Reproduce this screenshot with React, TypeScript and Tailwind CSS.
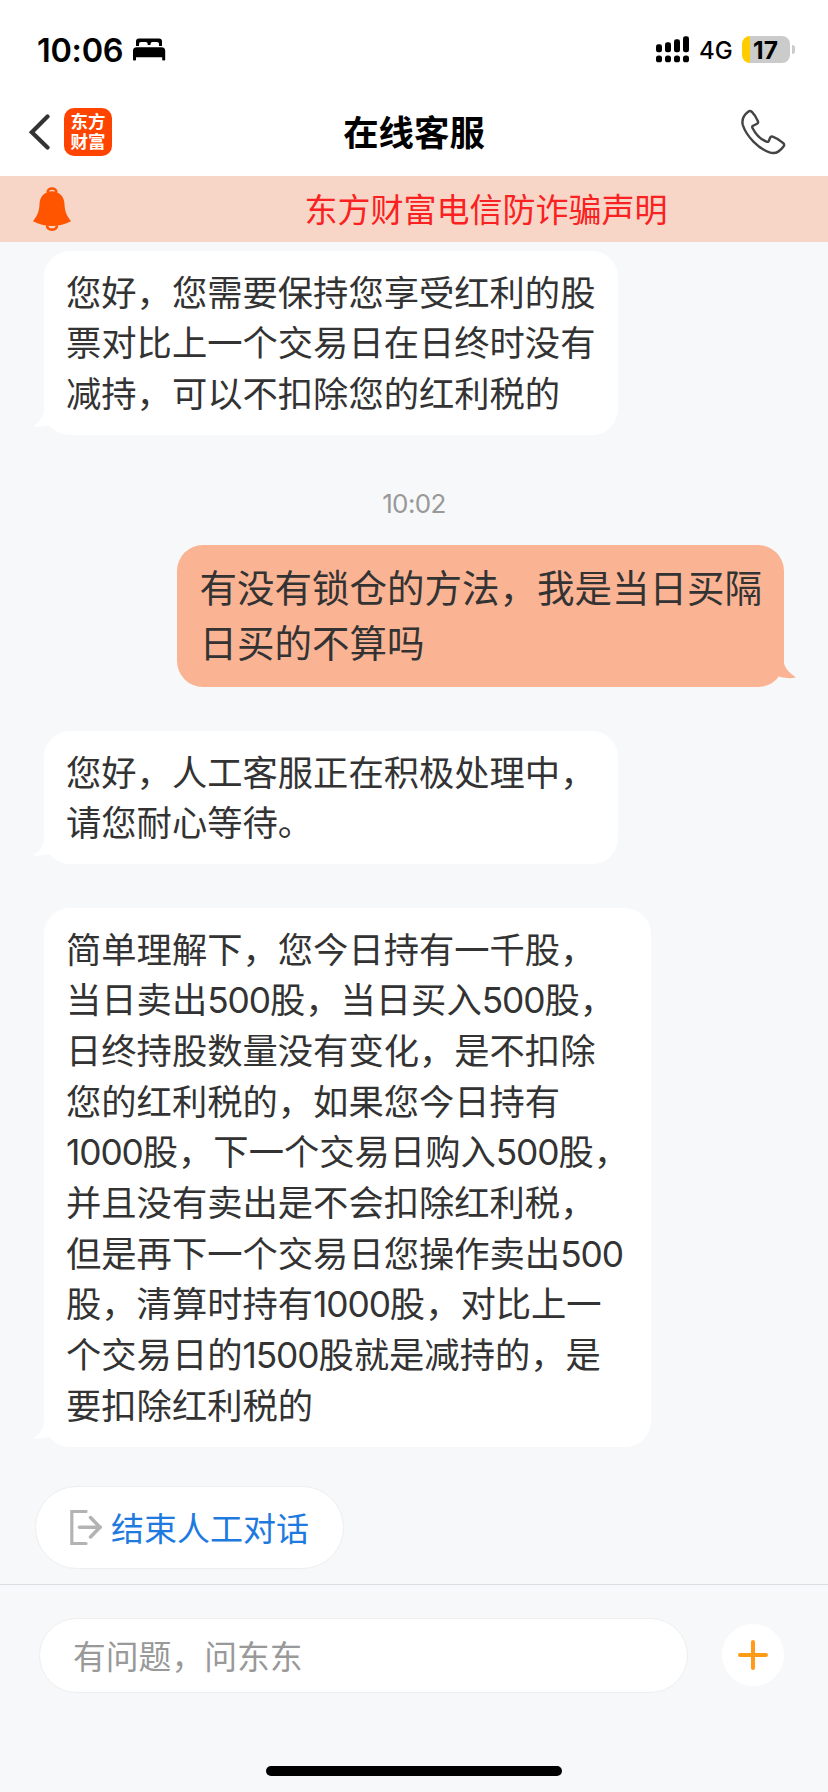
import type { ReactNode } from "react";

const agentLines = {
  dividend: ["您好，您需要保持您享受红利的股", "票对比上一个交易日在日终时没有", "减持，可以不扣除您的红利税的"],
  waiting: ["您好，人工客服正在积极处理中，", "请您耐心等待。"],
  explain: [
    "简单理解下，您今日持有一千股，",
    "当日卖出500股，当日买入500股，",
    "日终持股数量没有变化，是不扣除",
    "您的红利税的，如果您今日持有",
    "1000股，下一个交易日购入500股，",
    "并且没有卖出是不会扣除红利税，",
    "但是再下一个交易日您操作卖出500",
    "股，清算时持有1000股，对比上一",
    "个交易日的1500股就是减持的，是",
    "要扣除红利税的",
  ],
};

const userLines = ["有没有锁仓的方法，我是当日买隔", "日买的不算吗"];

function Line({ text }: { text: string }) {
  return (
    <span className="block whitespace-nowrap">
      {text.split(/(\d+)/).map((part, i) =>
        /^\d+$/.test(part) ? (
          <span key={i} className="tracking-[-1.1px]">{part}</span>
        ) : (
          part
        ),
      )}
    </span>
  );
}

function AgentBubble({ lines, className }: { lines: string[]; className: string }) {
  return (
    <div className={`relative ml-11 rounded-[26px] bg-white px-[22px] pt-[17.6px] text-[35.3px] leading-[50.67px] text-[#333] ${className}`}>
      {lines.map((l) => (
        <Line key={l} text={l} />
      ))}
      <svg className="absolute bottom-[6px] -left-[11px]" width="20" height="18" viewBox="0 0 20 18">
        <path d="M11 0C10.5 6 6 11.500 0 15.300C5 15.900 10 15.400 15.500 14.300L20 16V0Z" fill="#fff" />
      </svg>
    </div>
  );
}

function UserBubble({ lines }: { lines: string[] }) {
  return (
    <div className="relative mt-[28px] mr-11 h-[142px] w-[607px] self-end rounded-[26px] bg-[#fab494] px-[22.5px] pt-[16px] text-[37.5px] leading-[55.400px] text-[#333]">
      {lines.map((l) => (
        <Line key={l} text={l} />
      ))}
      <svg className="absolute -right-[12px] bottom-[7px]" width="20" height="18" viewBox="0 0 20 18">
        <path d="M8 1C9 6.500 14 11.500 20 15.300C15 16.800 10 16.200 4 15L0 12V0H8Z" fill="#fab494" />
      </svg>
    </div>
  );
}

function BedIcon() {
  return (
    <svg width="33" height="23" viewBox="0 0 33 23" className="ml-[10px]">
      <path d="M3 8V3.500Q3 0.500 6 0.500H26Q29 0.500 29 3.500V8H26V6Q26 4 24 4H19.500Q17.500 4 17.500 6V7H14.700V6Q14.700 4 12.700 4H8Q6 4 6 6V8Z" />
      <path d="M0 22V13Q0 9.300 3.700 9.300H28.500Q32.200 9.300 32.200 13V22Q30.700 23 29.200 22V19.300H3V22Q1.500 23 0 22Z" />
    </svg>
  );
}

function SignalIcon() {
  const heights = [8, 10, 13, 16];
  return (
    <svg width="34" height="27" viewBox="0 0 34 27">
      {heights.map((h, i) => (
        <g key={h}>
          <rect x={i * 9} y={16.300 - h} width="6" height={h} rx="2.300" />
          <rect x={i * 9} y="19.500" width="6" height="6.800" rx="2.600" />
        </g>
      ))}
    </svg>
  );
}

function StatusBar() {
  return (
    <div className="flex h-[88px] items-start pt-[36px] pr-[33px] pl-[37px] text-black">
      <div className="flex h-[27px] items-center">
        <span className="w-[86px] pt-[1px] text-[32.5px] leading-[27px] font-semibold whitespace-nowrap tracking-[-0.3px]">10:06</span>
        <BedIcon />
      </div>
      <div className="ml-auto flex h-[27px] items-center">
        <SignalIcon />
        <span className="ml-[9px] w-[43px] pt-[2px] text-[24px] leading-[27px] font-medium whitespace-nowrap">4G</span>
        <div className="flex h-[27px] w-[48px] items-center justify-center rounded-[8px] bg-[linear-gradient(90deg,#ffcc00_8px,#cbcbcb_8px)] text-[24.5px] leading-[30px] font-bold">
          <span className="-ml-[1px]">17</span>
        </div>
        <div className="ml-[2px] h-[9px] w-[3px] rounded-r-full bg-[#cbcbcb]" />
      </div>
    </div>
  );
}

function Header() {
  return (
    <div className="grid h-[88px] grid-cols-[1fr_auto_1fr] items-center">
      <div className="flex items-center pl-[28px]">
        <svg width="22" height="36" viewBox="0 0 22 36" fill="none" stroke="#333" strokeWidth="4.200">
          <path d="M19.500 2.500L3.800 18.200L19.500 33.500" strokeLinecap="round" />
        </svg>
        <div className="ml-[14px] flex h-[48px] w-[48px] flex-col items-center justify-center rounded-[10px] bg-[#ff4400] text-[17.500px] leading-[20px] font-bold text-white">
          <span>东方</span>
          <span>财富</span>
        </div>
      </div>
      <h1 className="pt-[3px] text-[35.400px] leading-[44px] font-bold text-black">在线客服</h1>
      <svg className="mr-[42px] justify-self-end" width="46" height="46" viewBox="0 0 46 46" fill="none" stroke="#444" strokeWidth="2.400" strokeLinejoin="round">
        <path d="M8.500 2.500C9.700 1.500 10.700 1.700 11.900 2.900C14.500 5.500 16.500 8.800 17.900 12.300C18.400 13.500 18 14.300 17 14.800L13.200 16.700C12.100 17.200 12 18 12.500 19C15.500 25 21 30.700 27 32.800C28 33.100 28.500 32.800 28.900 31.800L30.100 28.700C30.600 27.500 31.500 27.200 32.700 27.600C36.500 29 40.300 31.300 43.300 34.200C44.400 35.300 44.500 36.300 43.500 37.500C39.500 43 34.800 45.300 29.500 43.400C18.500 39.500 6.500 27.500 2.800 16C1.500 10.500 4.300 5.600 8.500 2.500Z" />
      </svg>
    </div>
  );
}

function Notice() {
  return (
    <div className="flex h-[66px] items-center bg-[#f8d6c7] pl-[33px]">
      <svg width="38" height="44" viewBox="0 0 38 44">
        <path d="M19 1.500C21.500 1.500 23.300 3 23.300 5M14.700 5C14.700 3 16.500 1.500 19 1.500" fill="none" stroke="#ff5500" strokeWidth="2.600" />
        <path d="M19 4.300C26.500 4.300 31.300 10 31.500 17C31.700 25 34 29 38 34.300C32 37.500 26 39 19 39C12 39 6 37.500 0 34.300C4 29 6.300 25 6.500 17C6.700 10 11.500 4.300 19 4.300Z" fill="#ff5500" />
        <path d="M14 38.500C14.500 44 23.500 44 24 38.500" fill="none" stroke="#ff5500" strokeWidth="2.600" />
      </svg>
      <p className="ml-[233.500px] pt-[1px] text-[33px] leading-[44px] whitespace-nowrap text-[#f92121]">东方财富电信防诈骗声明</p>
    </div>
  );
}

function Pill({ children, className }: { children: ReactNode; className: string }) {
  return <div className={`flex items-center rounded-full border border-[#eeeeee] bg-white ${className}`}>{children}</div>;
}

export default function App() {
  return (
    <div className="flex h-[1792px] w-[828px] flex-col overflow-hidden bg-[#f7f8fa] font-['Inter','Noto_Sans_CJK_SC',sans-serif]">
      <header className="bg-white">
        <StatusBar />
        <Header />
      </header>
      <Notice />
      <main className="flex h-[1342px] flex-col items-start pt-[9px]">
        <AgentBubble lines={agentLines.dividend} className="h-[184px] w-[574px]" />
        <time className="mt-[55px] mb-[-1px] self-center text-[26px] leading-[28px] tracking-[-0.6px] text-[#999]">10:02</time>
        <UserBubble lines={userLines} />
        <AgentBubble lines={agentLines.waiting} className="mt-[44px] h-[133px] w-[574px]" />
        <AgentBubble lines={agentLines.explain} className="mt-[44px] h-[539px] w-[606.5px]" />
        <Pill className="mt-[39px] ml-[35px] h-[83px] w-[309px] pl-[34px]">
          <svg width="32" height="35" viewBox="0 0 32 35" fill="none" stroke="#b3b3b3" strokeLinecap="round">
            <path d="M16 1.500H1.800V33.500H16" strokeWidth="3.200" />
            <path d="M9.500 17.300H30" strokeWidth="3.500" />
            <path d="M20.500 7.500L30 17.300L20.500 27" strokeWidth="3.500" />
          </svg>
          <span className="ml-[9px] pt-[2px] text-[33px] leading-[44px] whitespace-nowrap text-[#1f7ae0]">结束人工对话</span>
        </Pill>
      </main>
      <footer className="flex h-[208px] flex-col border-t border-[#dcdde0] pt-[33px]">
        <div className="flex items-center pl-[39px]">
          <Pill className="h-[75px] w-[649px] pt-[3px] pl-[33px] text-[32.800px] leading-[44px] text-[#999]">有问题，问东东</Pill>
          <button className="mb-[1px] ml-[34px] flex h-[62px] w-[62px] items-center justify-center rounded-full bg-white">
            <svg width="32" height="32" viewBox="0 0 32 32" stroke="#ff9b17" strokeWidth="4" strokeLinecap="round">
              <path d="M16 3V29M3 16H29" />
            </svg>
          </button>
        </div>
        <div className="mt-[73px] h-[10px] w-[296px] self-center rounded-full bg-black" />
      </footer>
    </div>
  );
}
